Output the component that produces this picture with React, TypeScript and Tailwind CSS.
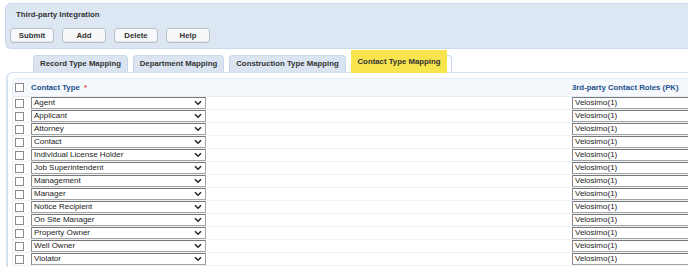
const buttons = ["Submit", "Add", "Delete", "Help"];

const tabs = [
  { label: "Record Type Mapping", width: "w-[95px]" },
  { label: "Department Mapping", width: "w-[91px]" },
  { label: "Construction Type Mapping", width: "w-[117px]" },
];

const contactTypes = [
  "Agent",
  "Applicant",
  "Attorney",
  "Contact",
  "Individual License Holder",
  "Job Superintendent",
  "Management",
  "Manager",
  "Notice Recipient",
  "On Site Manager",
  "Property Owner",
  "Well Owner",
  "Violator",
];

function Chevron() {
  return (
    <svg width="8" height="6" viewBox="0 0 8 6" className="shrink-0">
      <path d="M1 1.2 L4 4.2 L7 1.2" fill="none" stroke="#222" strokeWidth="1.5" />
    </svg>
  );
}

function Checkbox() {
  return <span className="block h-[9px] w-[9px] shrink-0 border border-[#8a8a8a] bg-white" />;
}

export default function App() {
  return (
    <div className="h-[267px] w-[688px] overflow-hidden bg-white font-['Liberation_Sans',Arial,sans-serif] text-[#333]">
      {/* top panel */}
      <div className="pl-[5px] pt-[3px]">
        <div className="h-[46px] w-[700px] rounded-l-[6px] border border-r-0 border-[#cbd9ea] bg-[#dde7f3] pl-[4px] pt-[6px]">
          <p className="ml-[6px] text-[7.8px] font-bold leading-[10px] text-[#333]">
            Third-party Integration
          </p>
          <div className="mt-[8px] flex gap-[8px]">
            {buttons.map((b) => (
              <div
                key={b}
                className="flex h-[15px] w-[44px] items-center justify-center rounded-[3px] border border-[#b9c2cc] bg-[#f7f8fa] text-[7.8px] font-bold text-[#333] shadow-[inset_0_-1px_0_#e2e6ea]"
              >
                {b}
              </div>
            ))}
          </div>
        </div>
      </div>

      {/* tabs */}
      <div className="relative mt-[2px] flex h-[21px] items-end gap-[5px] pl-[33px]">
        {tabs.map((t) => (
          <div
            key={t.label}
            className={`flex h-[17px] ${t.width} items-center justify-center rounded-t-[4px] border border-b-0 border-[#c9d7e8] bg-[#dbe5f1] text-[7.8px] font-bold text-[#333]`}
          >
            {t.label}
          </div>
        ))}
        <div className="flex h-[23px] w-[96px] translate-y-[1px] items-center justify-center bg-[#f8e44c] text-[7.8px] font-bold text-[#333]">
          Contact Type Mapping
        </div>
        <div className="-ml-[5px] h-[17px] w-[5px] rounded-tr-[4px] border-r border-t border-[#c9d7e8] bg-white" />
      </div>

      {/* content */}
      <div className="ml-[6px] h-[200px] w-[720px] rounded-tl-[6px] border-l-2 border-t border-[#d6e2f0] bg-white pl-[4px] pt-[5px]">
        <div className="rounded-tl-[5px] border-l border-t border-[#e4ecf5]">
          {/* header */}
          <div className="flex h-[18px] items-center border-b border-[#e4ecf5] bg-[#f5f8fc] pl-[2px]">
            <Checkbox />
            <span className="ml-[7px] w-[175px] text-[7.8px] font-bold text-[#24508c]">
              Contact Type <span className="ml-[2px] text-[#e04a3a]">*</span>
            </span>
            <span className="ml-[366px] text-[7.8px] font-bold text-[#24508c]">
              3rd-party Contact Roles (PK)
            </span>
          </div>
          {/* rows */}
          {contactTypes.map((c) => (
            <div key={c} className="flex h-[13px] items-center border-b border-[#eef2f7] pl-[2px]">
              <Checkbox />
              <div className="ml-[7px] flex h-[12px] w-[175px] items-center justify-between border border-[#a3a3a3] border-l-[#888] border-t-[#777] bg-white pl-[2px] pr-[3px] text-[8px] leading-none text-[#222]">
                <span>{c}</span>
                <Chevron />
              </div>
              <div className="ml-[366px] flex h-[12px] w-[140px] items-center border border-[#a3a3a3] border-l-[#888] border-t-[#777] bg-white pl-[2px] text-[8px] leading-none text-[#222]">
                Velosimo(1)
              </div>
            </div>
          ))}
        </div>
      </div>
    </div>
  );
}
